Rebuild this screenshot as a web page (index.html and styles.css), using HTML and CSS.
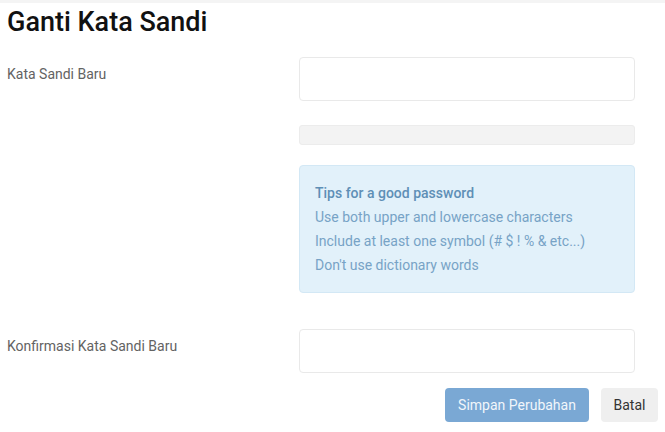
FILE: index.html
```html
<!DOCTYPE html>
<html lang="id">
<head>
    <meta charset="UTF-8">
    <meta name="viewport" content="width=device-width, initial-scale=1.0">
    <title>Ganti Kata Sandi</title>
    <link rel="stylesheet" href="styles.css">
</head>
<body>
    <div class="page">
        <h1 class="title">Ganti Kata Sandi</h1>
        <form class="password-form">
            <div class="form-row">
                <label class="form-label" for="new-password">Kata Sandi Baru</label>
                <div class="form-field">
                    <input type="password" id="new-password" class="form-input">
                    <div class="strength-bar"></div>
                    <div class="tips">
                        <strong>Tips for a good password</strong>
                        <span>Use both upper and lowercase characters</span>
                        <span>Include at least one symbol (# $ ! % &amp; etc...)</span>
                        <span>Don't use dictionary words</span>
                    </div>
                </div>
            </div>
            <div class="form-row confirm-row">
                <label class="form-label" for="confirm-password">Konfirmasi Kata Sandi Baru</label>
                <div class="form-field">
                    <input type="password" id="confirm-password" class="form-input">
                </div>
            </div>
            <div class="actions">
                <button type="button" class="btn btn-primary">Simpan Perubahan</button>
                <button type="button" class="btn btn-default">Batal</button>
            </div>
        </form>
    </div>
</body>
</html>
```

FILE: styles.css
```css
body {
    margin: 0;
    font-family: Roboto, "Liberation Sans", sans-serif;
    background-color: #fff;
    color: #333;
    border-top: 3px solid #f4f4f4;
}

.page {
    padding: 0 7px;
}

.title {
    margin: 1px 0 0;
    font-size: 27px;
    font-weight: 500;
    line-height: 36px;
    color: #111;
}

.form-row {
    display: grid;
    grid-template-columns: 292px 336px;
    margin-top: 17px;
}

.confirm-row {
    margin-top: 36px;
}

.form-label {
    padding-top: 9px;
    font-size: 14px;
    font-weight: 400;
    line-height: 16px;
    color: #636363;
}

.form-field {
    display: flex;
    flex-direction: column;
}

.form-input {
    height: 44px;
    box-sizing: border-box;
    border: 1px solid #e9e9e9;
    border-radius: 4px;
    background-color: #fff;
    outline: none;
}

.strength-bar {
    height: 20px;
    margin-top: 24px;
    box-sizing: border-box;
    border: 1px solid #ececec;
    border-radius: 3px;
    background-color: #f3f3f3;
}

.tips {
    display: flex;
    flex-direction: column;
    margin-top: 20px;
    height: 128px;
    box-sizing: border-box;
    padding: 15px 15px 0;
    border: 1px solid #d3e8f5;
    border-radius: 4px;
    background-color: #e2f1fa;
    font-size: 14px;
    line-height: 24px;
    color: #77a3c6;
}

.tips strong {
    color: #5e8fb6;
    font-weight: 500;
}

.actions {
    display: flex;
    justify-content: flex-end;
    gap: 12px;
    margin-top: 15px;
}

.btn {
    height: 34px;
    border: none;
    border-radius: 4px;
    font-family: Roboto, "Liberation Sans", sans-serif;
    font-size: 14px;
    cursor: pointer;
}

.btn-primary {
    width: 144px;
    background-color: #7aa8d4;
    color: #f1f6fb;
}

.btn-default {
    width: 57px;
    background-color: #efefef;
    color: #333;
}
```
